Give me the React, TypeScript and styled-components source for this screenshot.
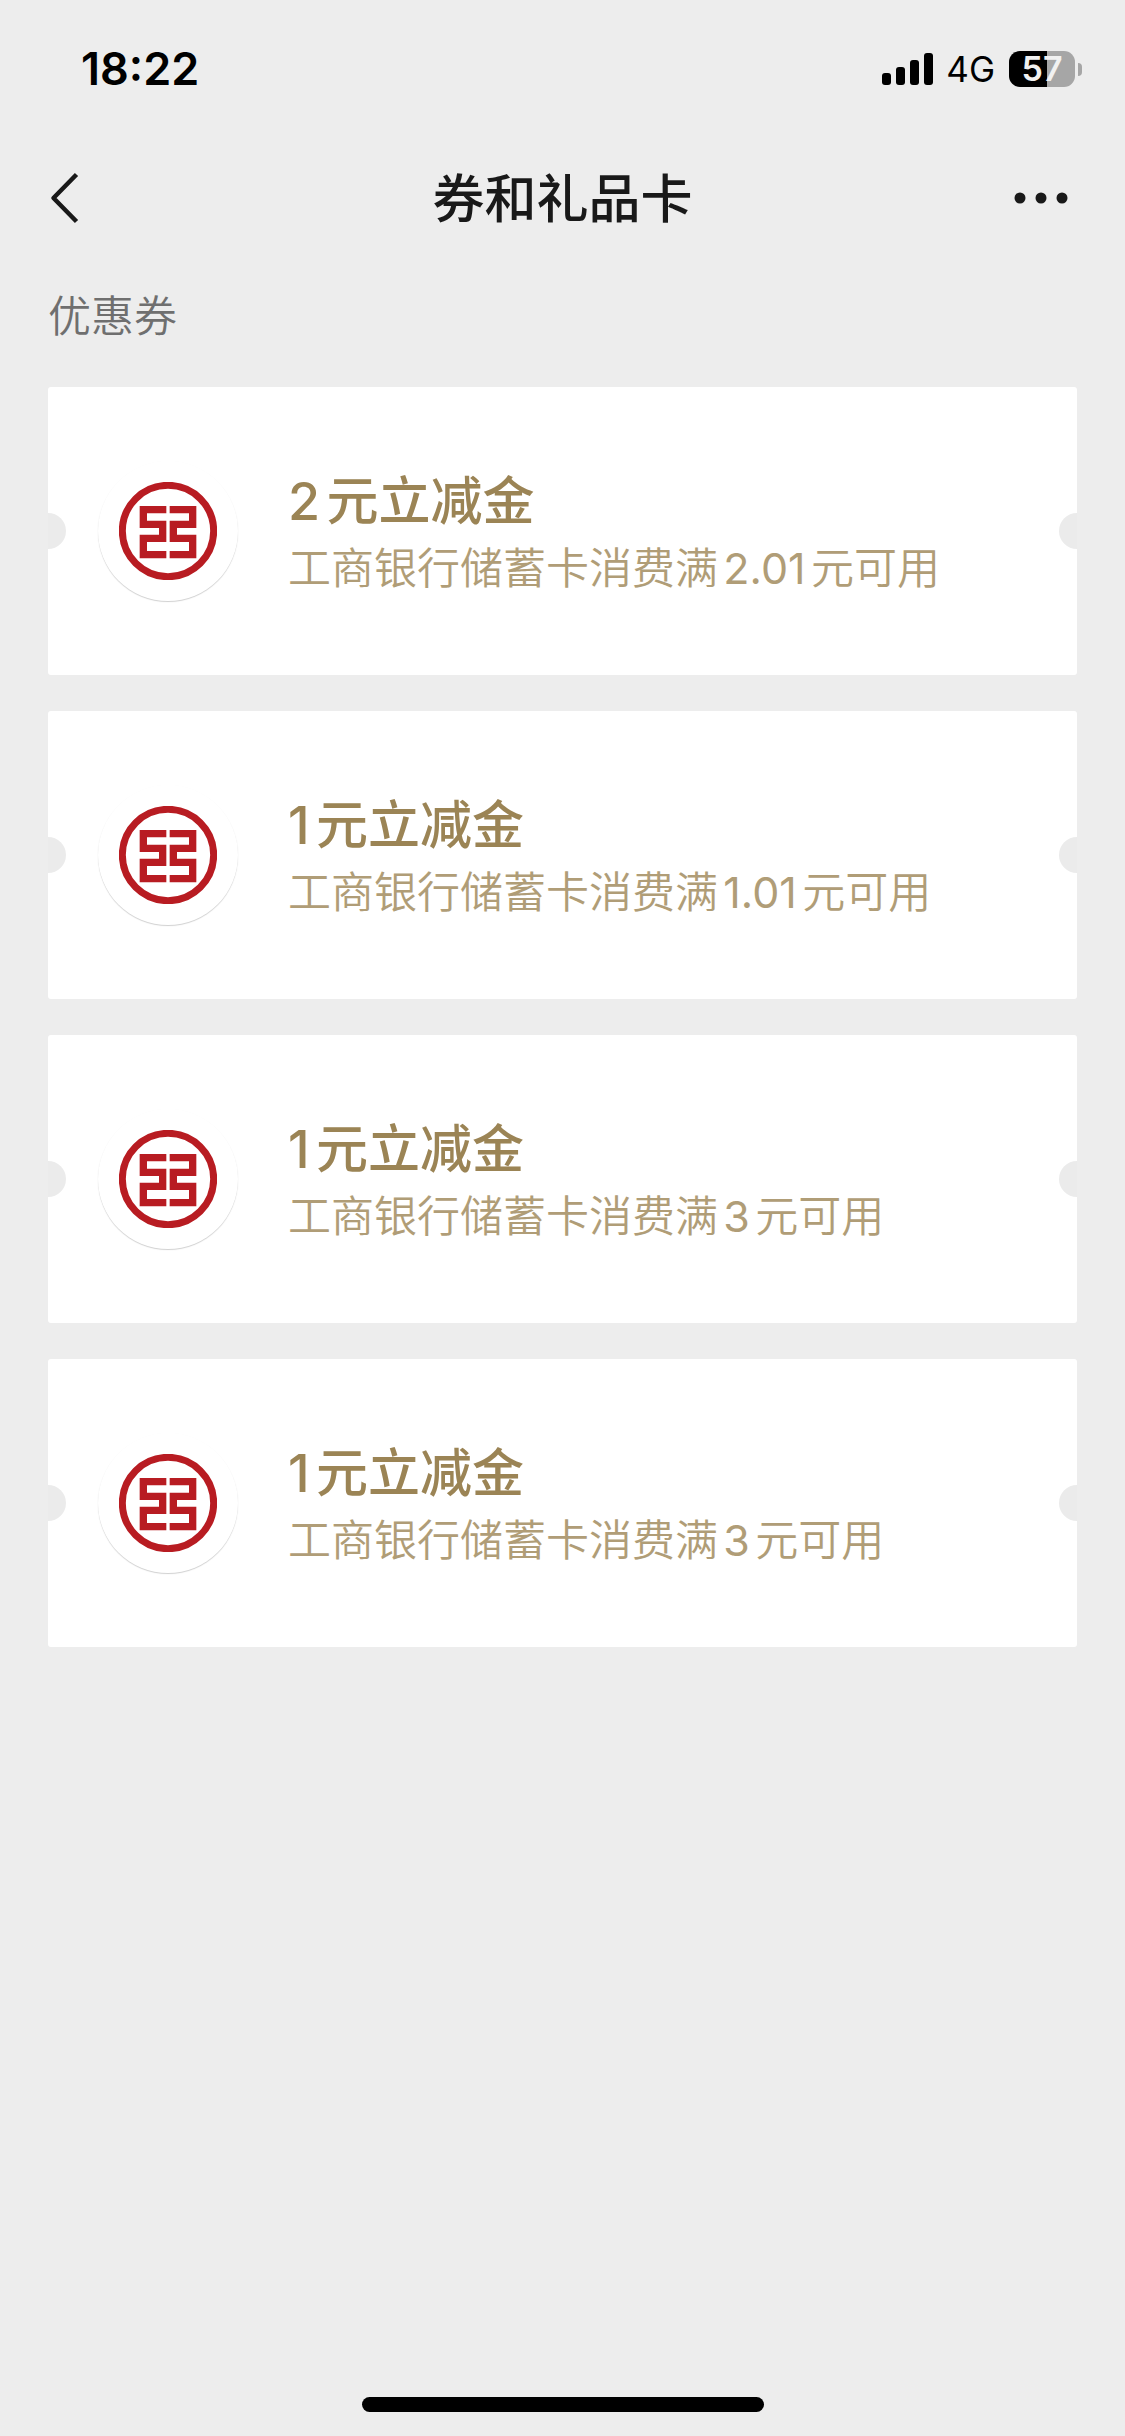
import React from "react";
import styled, { createGlobalStyle } from "styled-components";

const GlobalStyle = createGlobalStyle`
  *, *::before, *::after { box-sizing: border-box; }
  body {
    margin: 0;
    background: #ededed;
    font-family: Inter, "Noto Sans CJK SC", sans-serif;
    text-autospace: normal;
  }
  h1, h2, h3, p, ul { margin: 0; padding: 0; }
`;

const Page = styled.div`
  display: flex;
  flex-direction: column;
  min-height: 100vh;
  background: #ededed;
`;

const StatusBar = styled.div`
  display: flex;
  align-items: center;
  justify-content: space-between;
  height: 132px;
  padding: 6px 43px 0 81px;
  color: #000;
`;

const Clock = styled.time`
  font-size: 45px;
  line-height: 52px;
  font-weight: 600;
`;

const StatusIcons = styled.div`
  display: flex;
  align-items: center;
`;

const SignalIcon = styled.svg`
  width: 51px;
  height: 32px;
`;

const Network = styled.span`
  margin: 0 14px 0 13px;
  font-size: 35px;
  line-height: 36px;
`;

const Battery = styled.span`
  display: flex;
  align-items: center;
  gap: 3px;
`;

const BatteryBody = styled.span<{ $level: number }>`
  width: 66px;
  height: 36px;
  border-radius: 11px;
  background: linear-gradient(
    to right,
    #000 ${(p) => p.$level}%,
    #a6a6a6 ${(p) => p.$level}%
  );
  color: #f1f1f1;
  font-size: 34px;
  line-height: 36px;
  font-weight: 600;
  text-align: center;
`;

const BatteryCap = styled.span`
  width: 4px;
  height: 13px;
  border-radius: 0 4px 4px 0;
  background: #a6a6a6;
`;

const NavBar = styled.header`
  display: grid;
  grid-template-columns: 1fr auto 1fr;
  align-items: center;
  height: 132px;
  padding: 0 48px;
  color: #191919;
`;

const NavTitle = styled.h1`
  padding-top: 4px;
  font-size: 52px;
  line-height: 72px;
  font-weight: 500;
`;

const IconButton = styled.button<{ $end?: boolean }>`
  display: flex;
  justify-self: ${(p) => (p.$end ? "end" : "start")};
  padding: 0;
  border: 0;
  background: none;
  color: inherit;
  cursor: pointer;
`;

const Section = styled.main`
  flex: 1;
  padding: 22px 48px 0;
`;

const SectionTitle = styled.h2`
  color: #6f6f6f;
  font-size: 43px;
  line-height: 60px;
  font-weight: 350;
`;

const CouponList = styled.ul`
  display: flex;
  flex-direction: column;
  gap: 36px;
  margin-top: 41px;
  list-style: none;
`;

const Coupon = styled.li`
  position: relative;
  display: flex;
  align-items: center;
  gap: 50px;
  height: 288px;
  padding: 0 50px;
  overflow: hidden;
  border-radius: 3px;
  background: #fff;

  &::before,
  &::after {
    content: "";
    position: absolute;
    top: 126px;
    width: 36px;
    height: 36px;
    border-radius: 50%;
    background: #ebebeb;
  }
  &::before { left: -18px; }
  &::after { right: -18px; }
`;

const LogoDisc = styled.span`
  display: flex;
  align-items: center;
  justify-content: center;
  width: 140px;
  height: 140px;
  border-radius: 50%;
  background: #fff;
  box-shadow: 0 1px 1px #d0d0d0;
`;

const CouponText = styled.div`
  display: flex;
  flex-direction: column;
  padding-top: 1px;
`;

const CouponTitle = styled.h3`
  color: #9b8455;
  font-size: 52px;
  line-height: 72px;
  font-weight: 500;
`;

const CouponRule = styled.p`
  color: #b09d77;
  font-family: Inter, "Noto Sans CJK SC DemiLight", "Noto Sans CJK SC", sans-serif;
  font-size: 43px;
  line-height: 60px;
  font-weight: 400;
`;

const Footer = styled.footer`
  display: flex;
  justify-content: center;
  padding: 24px;
`;

const HomeIndicator = styled.span`
  width: 402px;
  height: 15px;
  border-radius: 8px;
  background: #000;
`;

function BankLogo() {
  return (
    <svg width="98" height="98" viewBox="0 0 294 294" role="img" aria-label="工商银行">
      <circle cx="147" cy="147" r="137" fill="none" stroke="#b81c22" strokeWidth="21" />
      <g fill="none" stroke="#b81c22" strokeWidth="22">
        <path d="M142 83H73V127H131V169H73V218H142" />
        <path d="M152 83H221V127H163V169H221V218H152" />
      </g>
    </svg>
  );
}

const coupons = [
  { id: 1, title: "2元立减金", rule: "工商银行储蓄卡消费满2.01元可用" },
  { id: 2, title: "1元立减金", rule: "工商银行储蓄卡消费满1.01元可用" },
  { id: 3, title: "1元立减金", rule: "工商银行储蓄卡消费满3元可用" },
  { id: 4, title: "1元立减金", rule: "工商银行储蓄卡消费满3元可用" },
];

export default function App() {
  return (
    <Page>
      <GlobalStyle />
      <StatusBar>
        <Clock>18:22</Clock>
        <StatusIcons>
          <SignalIcon viewBox="0 0 51 32" aria-hidden="true">
            <rect x="0" y="20" width="9" height="12" rx="3" />
            <rect x="14" y="14" width="9" height="18" rx="3" />
            <rect x="28" y="7" width="9" height="25" rx="3" />
            <rect x="42" y="0" width="9" height="32" rx="3" />
          </SignalIcon>
          <Network>4G</Network>
          <Battery>
            <BatteryBody $level={57}>57</BatteryBody>
            <BatteryCap />
          </Battery>
        </StatusIcons>
      </StatusBar>
      <NavBar>
        <IconButton type="button" aria-label="返回">
          <svg width="34" height="54" viewBox="0 0 34 54" fill="none" stroke="currentColor" strokeWidth="4.5">
            <path d="M28.5 3.5L5.5 27L28.5 50.5" strokeLinejoin="round" />
          </svg>
        </IconButton>
        <NavTitle>券和礼品卡</NavTitle>
        <IconButton type="button" aria-label="更多" $end>
          <svg width="63" height="54" viewBox="0 0 63 54" fill="currentColor">
            <circle cx="6" cy="27" r="5.5" />
            <circle cx="27" cy="27" r="5.5" />
            <circle cx="48" cy="27" r="5.5" />
          </svg>
        </IconButton>
      </NavBar>
      <Section>
        <SectionTitle>优惠券</SectionTitle>
        <CouponList>
          {coupons.map((c) => (
            <Coupon key={c.id}>
              <LogoDisc>
                <BankLogo />
              </LogoDisc>
              <CouponText>
                <CouponTitle>{c.title}</CouponTitle>
                <CouponRule>{c.rule}</CouponRule>
              </CouponText>
            </Coupon>
          ))}
        </CouponList>
      </Section>
      <Footer>
        <HomeIndicator />
      </Footer>
    </Page>
  );
}
